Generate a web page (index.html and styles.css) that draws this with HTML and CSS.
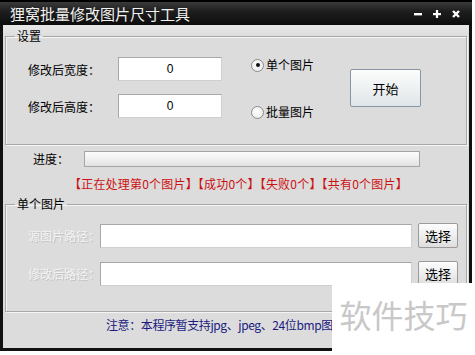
FILE: index.html
```html
<!DOCTYPE html>
<html lang="zh">
<head>
<meta charset="utf-8">
<title>狸窝批量修改图片尺寸工具</title>
<link rel="stylesheet" href="styles.css">
</head>
<body>
<div class="window">
  <div class="titlebar">
    <span class="title">狸窝批量修改图片尺寸工具</span>
    <div class="ctrls">
      <span class="ctrl"><svg width="8" height="8" viewBox="0 0 8 8"><rect x="0" y="3" width="8" height="2.4" fill="#fff"/></svg></span>
      <span class="ctrl"><svg width="8" height="8" viewBox="0 0 8 8"><rect x="0" y="3" width="8" height="2.2" fill="#fff"/><rect x="2.9" y="0" width="2.2" height="8" fill="#fff"/></svg></span>
      <span class="ctrl"><svg width="8" height="8" viewBox="0 0 8 8"><path d="M1 1 L7 7 M7 1 L1 7" stroke="#fff" stroke-width="2.4"/></svg></span>
    </div>
  </div>
  <div class="content">
    <fieldset class="group g1">
      <legend>设置</legend>
      <div class="settings">
        <span class="lbl r1">修改后宽度：</span>
        <div class="input num r1">0</div>
        <label class="radio r1 top"><span class="dot on"></span>单个图片</label>
        <span class="lbl r2">修改后高度：</span>
        <div class="input num r2">0</div>
        <label class="radio r2 bottom"><span class="dot"></span>批量图片</label>
        <button class="start">开始</button>
      </div>
    </fieldset>
    <div class="progress-row">
      <span class="plbl">进度：</span>
      <div class="bar"></div>
    </div>
    <div class="status">【正在处理第0个图片】【成功0个】【失败0个】【共有0个图片】</div>
    <fieldset class="group g2">
      <legend>单个图片</legend>
      <div class="paths">
        <span class="lbl dis">源图片路径：</span>
        <div class="input"></div>
        <button class="pick">选择</button>
        <span class="lbl dis">修改后路径：</span>
        <div class="input"></div>
        <button class="pick">选择</button>
      </div>
    </fieldset>
    <div class="note">注意：本程序暂支持jpg、jpeg、24位bmp图</div>
  </div>
</div>
<div class="watermark">软件技巧</div>
</body>
</html>
```
FILE: styles.css
```css
html, body {
  margin: 0;
  padding: 0;
  background: #ffffff;
  width: 475px;
  height: 355px;
  overflow: hidden;
  font-family: "Noto Sans CJK SC", "Liberation Sans", sans-serif;
  font-size: 12px;
  color: #000;
}
.window {
  width: 472px;
  height: 351px;
  box-sizing: border-box;
  border: 3px solid #111;
  border-top: 0;
  display: flex;
  flex-direction: column;
  background: #dcdcdc;
}
.titlebar {
  height: 25px;
  flex: none;
  margin: 0 -3px;
  background: linear-gradient(#3a3a3a, #1e1e1e 40%, #0d0d0d);
  border-top: 2px solid #000;
  box-sizing: border-box;
  display: flex;
  align-items: center;
  padding-left: 10px;
  padding-right: 12px;
}
.title {
  color: #f2f2f2;
  font-size: 15px;
  line-height: 18px;
  flex: 1;
}
.ctrls {
  display: flex;
  gap: 11px;
  margin-top: 1px;
}
.ctrl {
  width: 8px;
  height: 8px;
  display: flex;
}
.content {
  flex: 1;
  display: flex;
  flex-direction: column;
  background: linear-gradient(#e8e8e8, #dedede 10px, #dcdcdc 12px);
}
.group {
  margin: 0 2px;
  border: 1px solid #a8a8a8;
  box-shadow: inset 1px 1px 0 #f4f4f4, 1px 1px 0 #f4f4f4;
  padding: 0 0 0 22px;
  min-width: 0;
}
.group legend {
  padding: 0 2px;
  margin-left: -13px;
  line-height: 14px;
  font-size: 12px;
}
.g1 {
  margin-top: 4px;
  padding-top: 14px;
  padding-bottom: 26px;
}
.settings {
  display: grid;
  grid-template-columns: 90px 104px 29px 99px 71px;
  grid-template-rows: 24px 24px;
  row-gap: 13px;
  align-items: center;
}
.settings .r1 { grid-row: 1; }
.settings .r2 { grid-row: 2; }
.settings .lbl { grid-column: 1; padding-top: 1px; }
.settings .input { grid-column: 2; }
.settings .radio { grid-column: 4; }
.radio.top { align-self: start; margin-top: 0px; }
.radio.bottom { align-self: end; margin-bottom: -2px; }
.lbl {
  font-size: 12px;
  line-height: 16px;
  white-space: nowrap;
}
.input {
  height: 24px;
  box-sizing: border-box;
  background: #fff;
  border: 1px solid #a8a8a8;
  border-bottom-color: #d0d0d0;
  border-right-color: #d0d0d0;
}
.input.num {
  text-align: center;
  line-height: 22px;
  font-family: "Liberation Sans", sans-serif;
  font-size: 12px;
}
.radio {
  display: flex;
  align-items: center;
  gap: 2px;
  font-size: 12px;
  line-height: 16px;
}
.dot {
  width: 11px;
  height: 11px;
  border-radius: 50%;
  border: 1px solid #8c8c8c;
  background: radial-gradient(circle at 40% 40%, #fff, #e4e4e4);
  display: flex;
  align-items: center;
  justify-content: center;
}
.dot.on::after {
  content: "";
  width: 4px;
  height: 4px;
  border-radius: 50%;
  background: #111;
}
.start {
  grid-column: 5;
  grid-row: 1 / span 2;
  align-self: center;
  width: 71px;
  height: 38px;
  margin-top: 1px;
  border: 1px solid #8796a2;
  border-radius: 2px;
  background: linear-gradient(#fbfcfc, #eef1f2 50%, #dfe5e8);
  font-family: "Noto Sans CJK SC", sans-serif;
  font-size: 13px;
  color: #000;
  padding: 0;
}
.progress-row {
  display: flex;
  align-items: center;
  margin-top: 6px;
  padding-left: 30px;
  height: 16px;
}
.plbl {
  width: 51px;
  font-size: 12px;
  line-height: 16px;
}
.bar {
  width: 336px;
  height: 16px;
  box-sizing: border-box;
  border: 1px solid #a4a4a4;
  background: linear-gradient(#fcfcfc, #f0f0f0 50%, #e2e2e2);
}
.status {
  margin-top: 9px;
  margin-left: 66px;
  color: #cc1111;
  font-size: 12px;
  line-height: 16px;
  letter-spacing: 0.2px;
  white-space: nowrap;
}
.g2 {
  margin-top: 5px;
  padding-top: 12px;
  padding-bottom: 25px;
}
.paths {
  display: grid;
  grid-template-columns: 72px 312px 46px;
  grid-auto-rows: 25px;
  row-gap: 13px;
  align-items: center;
}
.paths .input { height: 24px; align-self: end; }
.lbl.dis {
  color: #f3f3f3;
  text-shadow: 1px 1px 0 #c4c4c4;
}
.pick {
  justify-self: end;
  width: 40px;
  height: 25px;
  padding: 0;
  border: 1px solid #9a9a9a;
  border-radius: 2px;
  background: linear-gradient(#fdfdfd, #eeeeee 50%, #dedede);
  font-family: "Noto Sans CJK SC", sans-serif;
  font-size: 13px;
  color: #000;
}
.note {
  margin-top: 5px;
  margin-left: 103px;
  color: #1a1a80;
  font-size: 12px;
  line-height: 16px;
  letter-spacing: -0.4px;
  white-space: nowrap;
}
.watermark {
  position: absolute;
  left: 332px;
  top: 283px;
  width: 143px;
  height: 72px;
  background: #fff;
  color: #c8c8c8;
  font-family: "Noto Sans CJK SC", sans-serif;
  font-size: 32px;
  line-height: 62px;
  text-align: center;
}
```
